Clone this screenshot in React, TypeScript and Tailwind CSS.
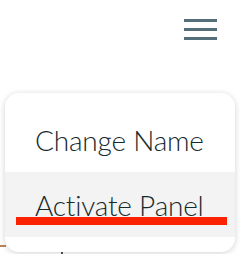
import React from "react";

const items = ["Change Name", "Activate Panel"];

function MenuIcon() {
  return (
    <svg width="33" height="21" viewBox="0 0 33 21" aria-hidden="true">
      <rect x="0" y="0" width="33" height="3" fill="#546e7a" />
      <rect x="0" y="9" width="33" height="3" fill="#546e7a" />
      <rect x="0" y="18" width="33" height="3" fill="#546e7a" />
    </svg>
  );
}

export default function App() {
  return (
    <div
      className="relative w-[240px] h-[254px] overflow-hidden bg-white"
      style={{ fontFamily: "Lato, 'Open Sans', sans-serif" }}
    >
      {/* bits of the page behind the menu */}
      <div className="absolute left-0 top-[245px] h-[2px] w-[6px] bg-[#b98458]" />
      <div className="absolute left-[61px] top-[251px] h-[3px] w-[2px] bg-[#5a5040]" />

      <div className="flex justify-end pt-[19px] pr-[23px]">
        <button type="button" className="block" title="Menu">
          <MenuIcon />
        </button>
      </div>

      <ul className="relative mx-[5px] mt-[53px] rounded-[14px] bg-white pt-[14px] pb-[15px] shadow-[0_1px_6px_rgba(0,0,0,0.18)]">
        {items.map((label, i) => (
          <li
            key={label}
            className={
              "relative flex h-[65px] items-center pl-[30px] text-[28px] font-light leading-none tracking-[-0.2px] text-[#16292d] " +
              (i === 1 ? "bg-[#f3f3f3]" : "")
            }
          >
            {label}
            {i === 1 && (
              <div className="absolute left-[11px] top-[45px] h-[8px] w-[211px] bg-[#fa2200]" />
            )}
          </li>
        ))}
      </ul>
    </div>
  );
}
